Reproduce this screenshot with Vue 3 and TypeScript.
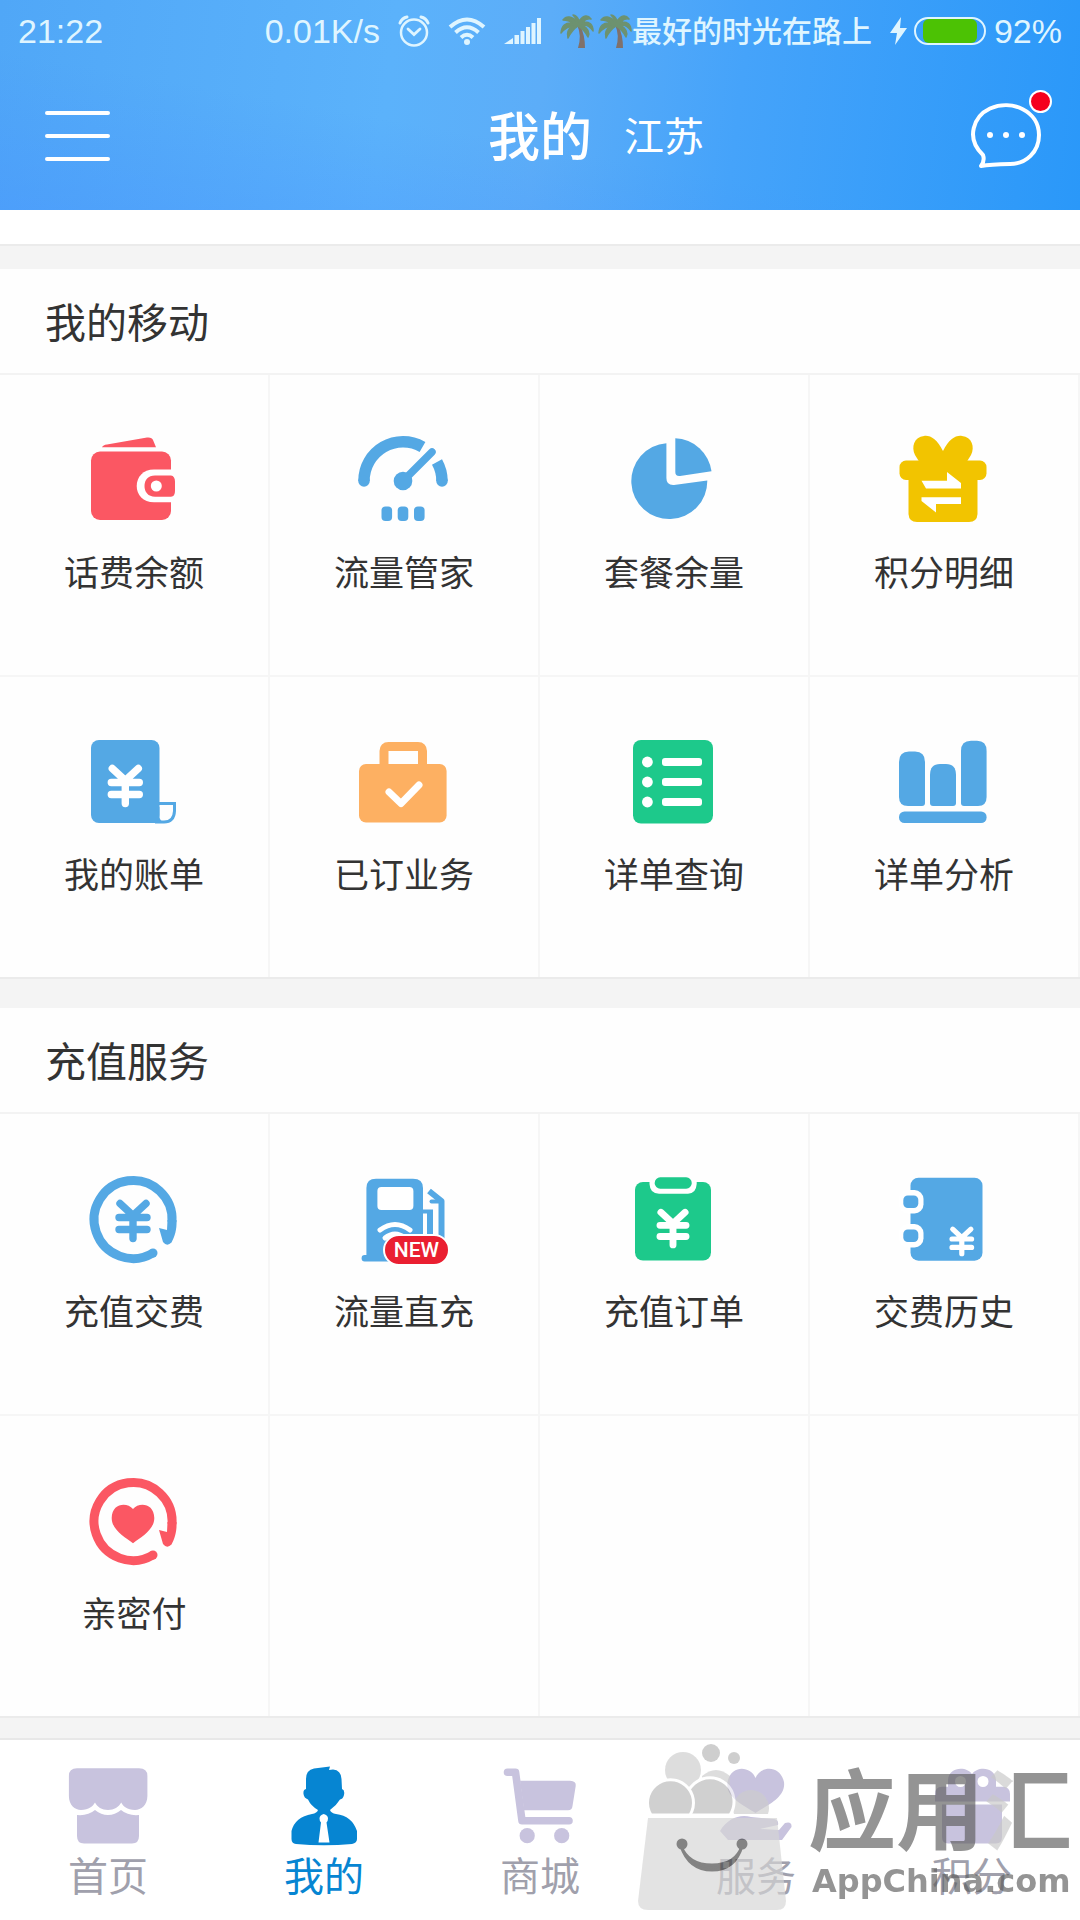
<script setup lang="ts">
interface Service {
  label: string
  icon: string
  badge?: string
}

interface Section {
  title: string
  items: Service[]
  blanks: number
}

interface Tab {
  label: string
  icon: string
  active?: boolean
}

const red = '#fb5763'
const blue = '#54a8e4'
const green = '#1dc98b'

// Yen sign drawn with four strokes around its own centre.
const yen = (x: number, y: number, scale: number, color: string): string =>
  `<path transform="translate(${x} ${y}) scale(${scale})" d="M-13 -19L0 -7L13 -19M-14 -5H14M-14 7H14M0 -7V16" fill="none" stroke="${color}" stroke-width="7.4" stroke-linecap="round" stroke-linejoin="round"/>`

// Open ring whose right end finishes in an arrow head.
const ring = (color: string): string =>
  `<path d="M64 79A39 39 0 1 1 83 48" fill="none" stroke="${color}" stroke-width="9"/><circle cx="64" cy="79" r="4.5" fill="${color}"/><path d="M70 54L78 56L78.500 46H87.500C88 56 85.500 63 82.500 68.500Q78 73 74 68Z" fill="${color}"/>`

const icons: Record<string, string> = {
  wallet: `<g fill="${red}"><path d="M13 12.300Q14 10 18 9.500L58 2.500Q63 2 64 5L67 12.300Z"/><rect x="2" y="16.500" width="80" height="68.500" rx="9"/></g><path d="M84 34.500H65C54 34.500 47.700 42 47.700 51S54 67.300 65 67.300H84Z" fill="#fff"/><path d="M66 40.500H82Q86 41 86 47V56Q86 61.500 82 61.700H66C59 61.700 55.500 57 55.500 51S59 40.500 66 40.500Z" fill="${red}"/><circle cx="67.300" cy="51" r="5.500" fill="#fff"/>`,
  gauge: `<g fill="none" stroke="${blue}" stroke-width="11.500"><path d="M5 46A39 39 0 0 1 63.500 12M78 27A39 39 0 0 1 83 46"/><path d="M44 46L73 17" stroke-width="7.500" stroke-linecap="round"/></g><g fill="${blue}"><circle cx="5" cy="46" r="5.750"/><circle cx="83" cy="46" r="5.750"/><circle cx="44" cy="46" r="9.300"/><rect x="22.500" y="71.500" width="10.600" height="14.500" rx="4"/><rect x="38.700" y="71.500" width="10.600" height="14.500" rx="4"/><rect x="55" y="71.500" width="10.600" height="14.500" rx="4"/></g>`,
  pie: `<g fill="${blue}"><path d="M37.400 8.200A38 38 0 1 0 78.300 45.500L45 50Q37.400 50.500 37.400 43Z"/><path d="M46.300 3.300A38 38 0 0 1 82.500 36.300L51 41Q46.300 41.500 46.300 37Z"/></g>`,
  gift: `<g fill="#f2c400"><path d="M44 16C38 4 31 0 25 1C15 2 12 12 16 20L21 28H67L72 20C76 12 73 2 63 1C57 0 50 4 44 16Z"/><rect x="0.500" y="25.500" width="87" height="19.500" rx="6.500"/><path d="M9.500 40H78.500V79Q78 87 70 87H18Q10 87 9.500 79Z"/></g><path d="M22.500 45.700H48V37L62 48V53.500H27Z M22.500 62.300H62V69H37V77.500L22.500 66Z" fill="#fff"/>`,
  bill: `<rect x="2" y="3" width="68.500" height="83" rx="8" fill="${blue}"/><path d="M69 66.500H85.500V74Q85 85 75 85H66" fill="none" stroke="${blue}" stroke-width="3"/><path d="M62 70V86H76Q70 84 70.400 78V70Z" fill="${blue}"/>${yen(36.3, 50.5, 1, '#fff')}`,
  briefcase: `<rect x="0" y="27" width="87.600" height="58.500" rx="7" fill="#fdb062"/><path d="M25 31V14Q25 9.500 29.500 9.500H59Q63.500 9.500 63.500 14V31" fill="none" stroke="#fdb062" stroke-width="9"/><path d="M30 55L42 66.500L60 48" fill="none" stroke="#fff" stroke-width="7" stroke-linecap="round" stroke-linejoin="round"/>`,
  list: `<rect x="4" y="3" width="80" height="83.500" rx="8" fill="${green}"/><g fill="#fff"><circle cx="18.400" cy="25" r="5.400"/><circle cx="18.400" cy="45" r="5.400"/><circle cx="18.400" cy="65" r="5.400"/><rect x="33" y="21" width="40" height="8" rx="3"/><rect x="33" y="41" width="40" height="8" rx="3"/><rect x="33" y="61" width="40" height="8" rx="3"/></g>`,
  bars: `<g fill="${blue}"><path d="M0 25Q0 14.500 10 14.500H16Q26 14.500 26 25V66Q26 69 23 69H9Q0 69 0 60Z"/><path d="M31 38Q31 27 41 27H47Q57 27 57 38V66Q57 69 54 69H34Q31 69 31 66Z"/><path d="M62 14Q62 3.700 72 3.700H78Q87.600 3.700 87.600 14V60Q87.600 69 79 69H65Q62 69 62 66Z"/><rect x="0" y="74.500" width="87.600" height="11.500" rx="5.500"/></g>`,
  recharge: `${ring(blue)}${yen(44, 48.5, 1, blue)}`,
  pump: `<g fill="${blue}"><path d="M7.400 14Q7.400 4.700 17 4.700H54Q64 4.700 64 14V84H7.400Z"/><rect x="2.600" y="81" width="66" height="6.500" rx="3"/></g><rect x="18.400" y="13" width="36" height="23" rx="4" fill="#fff"/><g fill="none" stroke="#fff" stroke-width="5" stroke-linecap="round"><path d="M21 56Q36 45 51 56"/><path d="M26 64Q36 56 46 64"/></g><g fill="none" stroke="${blue}" stroke-width="6"><path d="M62 37.500H74" stroke-width="4"/><path d="M71 36V84"/><path d="M70 17L82.500 27V84" stroke-linejoin="round"/><path d="M72.500 27.500H82" stroke-width="4" stroke-linecap="round"/></g>`,
  clipboard: `<rect x="6" y="8" width="76" height="78.500" rx="8" fill="${green}"/><path d="M20.500 7V10Q21 19.700 30 19.700H59Q67 19.700 67.700 10V7Z" fill="#fff"/><rect x="25.700" y="3.300" width="37" height="11.400" rx="5.500" fill="${green}"/>${yen(44, 56, 0.93, '#fff')}`,
  notebook: `<rect x="11.500" y="3.700" width="72" height="83" rx="8" fill="${blue}"/><g fill="#fff"><rect x="0" y="16" width="24.500" height="23.500" rx="9"/><rect x="0" y="50" width="24.500" height="23.500" rx="9"/></g><g fill="${blue}"><rect x="4.300" y="21.500" width="15" height="12.500" rx="4.500"/><rect x="4.300" y="55.500" width="15" height="12.500" rx="4.500"/></g>${yen(62.8, 68.5, 0.7, '#fff')}`,
  heart: `${ring(red)}<path d="M44 33C50 26 65 27 65.300 42C65.300 54 52 61 44 67.300C36 61 22.700 54 22.700 42C23 27 38 26 44 33Z" fill="${red}"/>`,
  home: '<path d="M11 4.300H73Q81.400 4.300 81.400 12V32C81.400 41 75 46 69 46C61 46 57 42 55.200 38.500C53 43 48 46 42 46S31 43 29 38.500C27 42 23 46 15 46C9 46 2.900 41 2.900 32V12Q2.900 4.300 11 4.300Z"/><path d="M11 51Q22 52 29 46Q35 51 42 51T55 46Q62 52 73 51V72Q73 79.500 66 79.500H18Q11 79.500 11 72Z"/>',
  person: '<path d="M24 25L24 15Q24 6 32 4.500L48 2.500L47 6L51 5.500Q59 6 59.500 15L60 25Q63 26 62 31Q61 35 58 35.500Q54 42 48 46Q49 49 54 50Q70 52 75 67V75Q75 79 70 80Q42 82.500 14 80Q9.500 79.500 9.500 75V67Q13 53 30 50Q35 49 36 46Q29 42 26 35.500Q22 34 21.500 30Q21 25.500 24 25Z"/><path d="M41.700 50Q46 51 46 54.500Q46 57 44.500 58.500L47.500 78.500H36.500L39 58.500Q37.500 57 37.500 54.500Q37.500 51 41.700 50Z" fill="#fff"/>',
  cart: '<path d="M22 16.700H72Q78.500 17 77.700 22L74.500 42Q74 46.300 70 46.300H26Z"/><path d="M9.500 8.200H17.500L24 56.700H71" fill="none" stroke="currentColor" stroke-width="7.600" stroke-linecap="round" stroke-linejoin="round"/><circle cx="29.200" cy="71.700" r="7.600"/><circle cx="63.700" cy="71.700" r="7.600"/>',
  care: '<path d="M41.500 14C46 2 66 0 70 18C72 33 54 41 41.500 49C29 41 11 33 13.500 18C17 0 37 2 41.500 14Z"/><path d="M6 67C14 54 26 50 37 53L60 55Q65 56 64 61L46 65L65 66L71 59Q78 57 77.500 63L68 76H14Z"/>',
  points: '<path fill-rule="evenodd" d="M42 10C37 2 18 2 18 17V22.700H12Q5 23 5 30V37.500H80V30Q80 23 73 22.700H66V17C66 2 47 2 42 10ZM30.500 12A5.500 5.500 0 1 1 30.500 23A5.500 5.500 0 1 1 30.500 12ZM53 12A5.500 5.500 0 1 1 53 23A5.500 5.500 0 1 1 53 12Z"/><path d="M12 40.500H72V73Q72 79.500 66 79.500H18Q12 79.500 12 73Z"/>',
}

const sections: Section[] = [
  {
    title: '我的移动',
    items: [
      { label: '话费余额', icon: 'wallet' },
      { label: '流量管家', icon: 'gauge' },
      { label: '套餐余量', icon: 'pie' },
      { label: '积分明细', icon: 'gift' },
      { label: '我的账单', icon: 'bill' },
      { label: '已订业务', icon: 'briefcase' },
      { label: '详单查询', icon: 'list' },
      { label: '详单分析', icon: 'bars' },
    ],
    blanks: 0,
  },
  {
    title: '充值服务',
    items: [
      { label: '充值交费', icon: 'recharge' },
      { label: '流量直充', icon: 'pump', badge: 'NEW' },
      { label: '充值订单', icon: 'clipboard' },
      { label: '交费历史', icon: 'notebook' },
      { label: '亲密付', icon: 'heart' },
    ],
    blanks: 3,
  },
]

const tabs: Tab[] = [
  { label: '首页', icon: 'home' },
  { label: '我的', icon: 'person', active: true },
  { label: '商城', icon: 'cart' },
  { label: '服务', icon: 'care' },
  { label: '积分', icon: 'points' },
]
</script>

<template>
  <div class="page">
    <header class="header">
      <div class="status">
        <span class="clock">21:22</span>
        <span class="speed">0.01K/s</span>
        <svg class="alarm" viewBox="0 0 32 32" width="32" height="32" fill="none" stroke="currentColor" stroke-width="2.500" stroke-linecap="round">
          <circle cx="16" cy="17.500" r="13" />
          <path d="M10 14L16 19.500L22 14" stroke-width="2.800" />
          <path d="M2 8Q4 3 9 2M30 8Q28 3 23 2" stroke-width="3" />
        </svg>
        <svg class="wifi" viewBox="0 0 38 28" width="38" height="28" fill="none" stroke="currentColor" stroke-width="4">
          <path d="M2 10Q19 -5 36 10M7.500 15.500Q19 5 30.500 15.500M13 20.500Q19 15 25 20.500" />
          <circle cx="19" cy="25" r="3" fill="currentColor" stroke="none" />
        </svg>
        <svg class="signal" viewBox="0 0 38 28" width="38" height="28" fill="currentColor">
          <path d="M0 27L9 21V27ZM10.500 18H15V27H10.500ZM16.500 14H20.500V27H16.500ZM22 10H26V27H22ZM27.500 6H31.500V27H27.500ZM33 1H37V27H33Z" />
        </svg>
        <svg v-for="n in 2" :key="n" class="palm" viewBox="0 0 34 36" width="34" height="36">
          <path d="M17 12Q22 22 18 35H25Q25 22 20 12Z" fill="#80716b" />
          <path d="M18 9Q8 0 3 7Q9 7 12 10Q2 9 1 20Q7 13 13 13Q6 17 8 25Q12 17 18 13Q24 16 28 24Q31 17 22 12Q29 11 33 18Q33 8 23 9Q26 5 31 6Q26 -1 19 8Q17 2 13 2Q16 5 18 9Z" fill="#6d9270" stroke="#6d9270" stroke-width="1.500" stroke-linejoin="round" />
        </svg>
        <span class="carrier">最好的时光在路上</span>
        <svg class="bolt" viewBox="0 0 18 28" width="18" height="28" fill="currentColor">
          <path d="M11 0L0 16H7L5 28L17 11H10Z" />
        </svg>
        <span class="battery"><span class="charge"></span></span>
        <span class="percent">92%</span>
      </div>
      <div class="nav">
        <button class="menu" type="button" aria-label="菜单"><i></i><i></i><i></i></button>
        <h1>我的</h1>
        <div class="nav-end">
          <button class="region" type="button">江苏</button>
          <button class="chat" type="button" aria-label="消息">
            <svg viewBox="0 0 72 68" width="72" height="68">
              <path d="M11 64Q15 59 13 53C-5 36 4 14 20 6.500C42 -3 69 9 69 33C69 50 56 62 40 62Q20 62.500 11 64Z" fill="none" stroke="currentColor" stroke-width="4" stroke-linejoin="round" />
              <g fill="currentColor"><circle cx="20" cy="33" r="3" /><circle cx="36" cy="33" r="3" /><circle cx="52" cy="33" r="3" /></g>
            </svg>
            <span class="dot"></span>
          </button>
        </div>
      </div>
    </header>

    <main>
      <div class="strip"></div>
      <section v-for="section in sections" :key="section.title">
        <h2>{{ section.title }}</h2>
        <div class="grid">
          <a v-for="item in section.items" :key="item.label" class="cell" href="#">
            <span class="icon">
              <svg viewBox="-5 -5 100 100" width="100" height="100" v-html="icons[item.icon]"></svg>
              <span v-if="item.badge" class="badge">{{ item.badge }}</span>
            </span>
            <span class="label">{{ item.label }}</span>
          </a>
          <div v-for="n in section.blanks" :key="n" class="cell"></div>
        </div>
      </section>
    </main>

    <footer class="footer">
      <nav class="tabs">
        <a v-for="tab in tabs" :key="tab.label" class="tab" :class="{ active: tab.active }" href="#">
          <svg viewBox="0 0 84 84" width="84" height="84" fill="currentColor" v-html="icons[tab.icon]"></svg>
          <span>{{ tab.label }}</span>
        </a>
      </nav>
      <div class="watermark">
        <svg class="bag" viewBox="0 0 150 170" width="150" height="170">
          <g fill="#cdcdcd">
            <circle cx="45" cy="27" r="18" />
            <path d="M64 33Q78 21 92 33V50H64Z" />
            <path d="M96 71A18 18 0 1 1 130 71Z" />
          </g>
          <g fill="#b6b6b6">
            <circle cx="73" cy="10" r="9" />
            <circle cx="96" cy="15" r="6" />
          </g>
          <g fill="#b8b8b8" stroke="#fff" stroke-width="3">
            <path d="M52 72A24 24 0 1 1 92 72Z" />
            <path d="M13 72A23 23 0 1 1 52 72Z" />
          </g>
          <path d="M10 75H139L148 158Q148 167 139 167H10Q0 167 0 158Z" fill="#d6d6d6" />
          <path d="M43 103Q51 127 74 127T104 103Q98 122 74 122T43 103Z" fill="#444" stroke="#444" stroke-width="3" />
          <circle cx="44" cy="101" r="5.500" fill="#444" />
          <circle cx="104" cy="101" r="5.500" fill="#444" />
        </svg>
        <div class="brand">
          <span class="brand-name">应用<span class="brand-last">汇</span></span>
          <span class="brand-site">AppChina.com</span>
        </div>
      </div>
    </footer>
  </div>
</template>

<style>
body {
  margin: 0;
  background: #f4f4f4;
}
</style>

<style scoped>
.page {
  display: flex;
  flex-direction: column;
  min-height: 100vh;
  color: #333;
  font-family: "Noto Sans CJK SC", sans-serif;
}

a {
  color: inherit;
  text-decoration: none;
}

button {
  padding: 0;
  border: 0;
  background: none;
  color: inherit;
  font: inherit;
}

svg {
  display: block;
  flex: none;
}

.header {
  background:
    linear-gradient(10deg, rgba(70, 145, 255, 0.4), rgba(70, 145, 255, 0) 40%),
    linear-gradient(97deg, #50a7f7 0%, #5bb2fb 36%, #5cadf8 50%, #45a3fa 68%, #2a98f9 100%);
  color: #fff;
}

.status {
  display: flex;
  align-items: center;
  height: 62px;
  padding: 0 18px;
  color: #dff5ff;
  font: 34px/60px "Liberation Sans", sans-serif;
}

.speed {
  margin-left: auto;
}

.alarm,
.wifi,
.signal {
  margin-left: 18px;
}

.palm {
  margin-left: 4px;
}

.signal + .palm {
  margin-left: 18px;
}

.carrier {
  padding-bottom: 4px;
  font: 500 30px/58px "Noto Sans CJK SC", sans-serif;
}

.bolt {
  margin-left: 18px;
}

.battery {
  box-sizing: border-box;
  width: 72px;
  height: 28px;
  margin: 0 8px 0 6px;
  padding: 0 7px;
  border: 2px solid currentColor;
  border-radius: 14px;
}

.charge {
  display: block;
  height: 100%;
  border-radius: 6px;
  background: #4cc204;
}

.nav {
  display: grid;
  grid-template-columns: 1fr auto 1fr;
  align-items: center;
  height: 148px;
  padding: 0 38px;
}

.menu {
  display: flex;
  flex-direction: column;
  justify-content: space-between;
  width: 65px;
  height: 50px;
  margin-left: 7px;
}

.menu i {
  height: 4px;
  border-radius: 2px;
  background: #fff;
}

h1 {
  margin: 0;
  padding-bottom: 4px;
  font-size: 52px;
  font-weight: 500;
  line-height: 72px;
}

.nav-end {
  display: flex;
  align-items: center;
  justify-content: space-between;
  padding-left: 32px;
}

.region {
  padding-bottom: 4px;
  font-size: 40px;
  line-height: 56px;
}

.chat {
  position: relative;
}

.dot {
  position: absolute;
  top: -12px;
  right: -10px;
  width: 19px;
  height: 19px;
  border: 2px solid #fff;
  border-radius: 50%;
  background: #f5001d;
}

.strip {
  height: 34px;
  border-bottom: 2px solid #ebebeb;
  background: #fff;
  margin-bottom: 23px;
}

section + section {
  margin-top: 29px;
}

h2 {
  margin: 0;
  padding: 0 45px 2px;
  border-bottom: 2px solid #f3f3f3;
  background: #fefefe;
  font-size: 41px;
  font-weight: 400;
  line-height: 102px;
}

.grid {
  display: grid;
  grid-template-columns: repeat(4, 1fr);
  border-bottom: 2px solid #ebebeb;
}

.cell {
  display: flex;
  flex-direction: column;
  align-items: center;
  box-sizing: border-box;
  min-height: 302px;
  padding-top: 55px;
  border-right: 2px solid #f6f6f6;
  border-bottom: 2px solid #f6f6f6;
  background: #fefefe;
}

.cell:nth-child(n + 5) {
  min-height: 300px;
  border-bottom: 0;
}

.icon {
  position: relative;
}

.badge {
  position: absolute;
  right: 4px;
  bottom: 3px;
  padding: 0 9px;
  border: 2px solid #fff;
  border-radius: 16px;
  background: #ea1f31;
  color: #fff;
  font: 500 21px/28px Roboto, sans-serif;
}

.label {
  margin-top: 17px;
  font-size: 35px;
  line-height: 48px;
}

.footer {
  position: relative;
  margin-top: auto;
  border-top: 2px solid #e8e8e8;
  background: #fff;
}

.tabs {
  display: flex;
  height: 180px;
}

.tab {
  display: flex;
  flex: 1;
  flex-direction: column;
  align-items: center;
  padding-top: 24px;
  color: #c8c3de;
}

.tab span {
  color: #a0a0ac;
  font-size: 40px;
  line-height: 52px;
}

.tab.active,
.tab.active span {
  color: #0685d2;
}

.watermark {
  position: absolute;
  right: 8px;
  bottom: 7px;
  display: flex;
  align-items: flex-start;
  gap: 20px;
  opacity: 0.66;
  pointer-events: none;
}

.brand {
  display: flex;
  flex-direction: column;
  color: #5d5d5d;
}

.brand-name {
  padding-top: 16px;
  font-size: 88px;
  font-weight: 700;
  line-height: 92px;
}

.brand-last {
  background: linear-gradient(90deg, #c8c8c8 32%, #5d5d5d 32%);
  background-clip: text;
  color: transparent;
}

.brand-site {
  padding: 10px 0 0 4px;
  font: bold 32px/40px "DejaVu Sans", sans-serif;
}
</style>
